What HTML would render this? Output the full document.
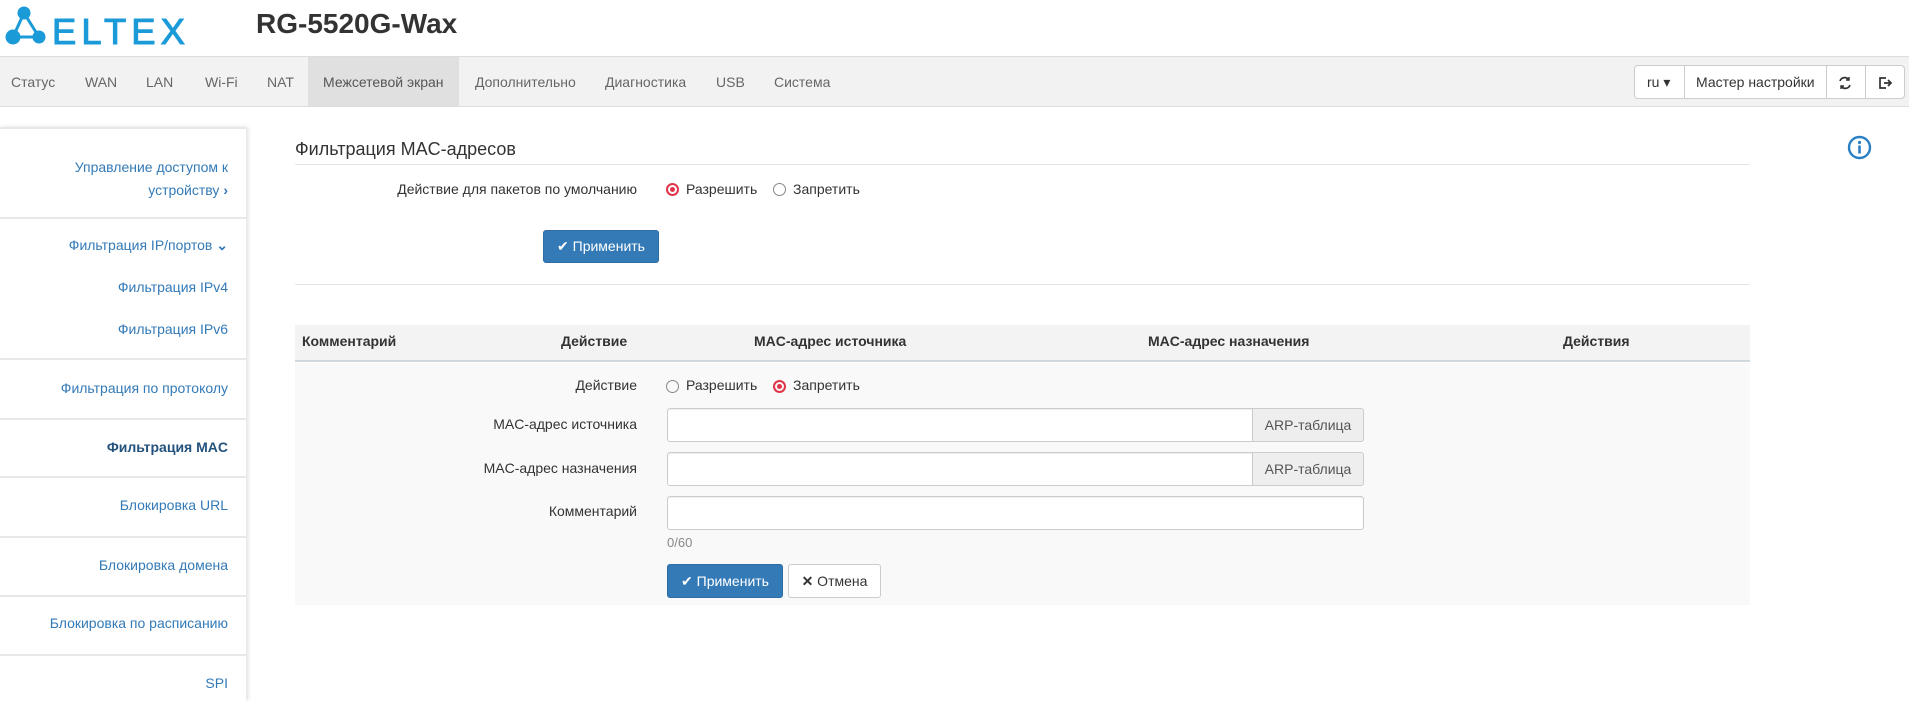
<!DOCTYPE html>
<html><head><meta charset="utf-8"><style>
*{box-sizing:border-box;margin:0;padding:0}
body{width:1909px;height:701px;overflow:hidden;background:#fff;font-family:"Liberation Sans","Noto Sans CJK SC",sans-serif;font-size:14px;color:#333;position:relative}
.a{position:absolute;white-space:nowrap}
.nav{position:absolute;left:0;top:56px;width:1909px;height:51px;background:#f2f2f2;border-top:1px solid #ddd;border-bottom:1px solid #ddd}
.nav span{position:absolute;top:17px;color:#666;font-size:14px}
.side{position:absolute;left:0;top:127px;width:246px;height:574px;background:#fff;box-shadow:2px 0 4px rgba(0,0,0,.12)}
.sl{position:absolute;left:0;width:246px;height:2px;background:#e8e8e8}
.si{position:absolute;right:18px;color:#337ab7;font-size:14px;text-align:right;white-space:nowrap}
.btnp{position:absolute;background:#337ab7;border:1px solid #2e6da4;border-radius:3px;color:#fff;font-size:14px;text-align:center}
.radio{position:absolute;width:13px;height:13px;border:1.5px solid #888;border-radius:50%}
.radio.on{border:2px solid #e0344a}
.radio.on::after{content:"";position:absolute;left:2px;top:2px;width:5px;height:5px;border-radius:50%;background:#e0344a}
.inp{position:absolute;background:#fff;border:1px solid #ccc;border-radius:3px;box-shadow:inset 0 1px 1px rgba(0,0,0,.075)}
.addon{position:absolute;background:#eee;border:1px solid #ccc;border-radius:0 3px 3px 0;color:#555;text-align:center;font-size:14px}
.th{position:absolute;top:333px;font-weight:bold;font-size:14px;color:#333}
</style></head><body>
<svg class="a" style="left:0;top:0" width="200" height="52">
<g fill="#1b9ad8" stroke="#1b9ad8" stroke-width="3">
<line x1="24" y1="13" x2="13" y2="37"/><line x1="24" y1="13" x2="39" y2="37"/><line x1="13" y1="37" x2="39" y2="37"/>
<circle cx="24" cy="13" r="6.5" stroke="none"/><circle cx="13" cy="37" r="7.5" stroke="none"/><circle cx="39" cy="37" r="6.5" stroke="none"/>
</g>
<text x="52" y="44" font-family="Liberation Sans" font-size="36" fill="#1b9ad8" stroke="#1b9ad8" stroke-width="1" letter-spacing="5" textLength="138" lengthAdjust="spacingAndGlyphs">ELTEX</text>
</svg>
<div class="a" style="left:256px;top:8px;font-size:28px;font-weight:bold;color:#333">RG-5520G-Wax</div>
<div class="nav">
<div style="position:absolute;left:308px;top:0;width:151px;height:49px;background:#e0e0e0"></div>
<span style="left:11px">Статус</span><span style="left:85px">WAN</span><span style="left:146px">LAN</span><span style="left:205px">Wi-Fi</span><span style="left:267px">NAT</span><span style="left:323px;color:#555">Межсетевой экран</span><span style="left:475px">Дополнительно</span><span style="left:605px">Диагностика</span><span style="left:716px">USB</span><span style="left:774px">Система</span>
<div style="position:absolute;left:1634px;top:8px;width:271px;height:34px;background:#fff;border:1px solid #ccc;border-radius:4px">
<div style="position:absolute;left:49px;top:0;width:1px;height:32px;background:#ccc"></div>
<div style="position:absolute;left:191px;top:0;width:1px;height:32px;background:#ccc"></div>
<div style="position:absolute;left:230px;top:0;width:1px;height:32px;background:#ccc"></div>
<span style="left:12px;top:8px;color:#333">ru ▾</span>
<span style="left:61px;top:8px;color:#333">Мастер настройки</span>
<svg style="position:absolute;left:202px;top:9px" width="16" height="16" viewBox="0 0 16 16" fill="none" stroke="#333" stroke-width="1.7"><path d="M3 6a5 5 0 0 1 9-1M13 10a5 5 0 0 1-9 1"/><path d="M12 2v3h-3M4 14v-3h3" stroke-width="1.4"/></svg>
<svg style="position:absolute;left:242px;top:9px" width="16" height="16" viewBox="0 0 16 16" fill="none" stroke="#333" stroke-width="1.7"><path d="M9 3H3v10h6M7 8h7M11 5l3 3-3 3"/></svg>
</div>
</div>
<div class="side">
<div class="sl" style="top:0"></div>
<div class="si" style="top:29px;line-height:23px">Управление доступом к<br>устройству <b>›</b></div>
<div class="sl" style="top:90px"></div>
<div class="si" style="top:110px">Фильтрация IP/портов <b>⌄</b></div>
<div class="si" style="top:152px">Фильтрация IPv4</div>
<div class="si" style="top:194px">Фильтрация IPv6</div>
<div class="sl" style="top:231px"></div>
<div class="si" style="top:253px">Фильтрация по протоколу</div>
<div class="sl" style="top:291px"></div>
<div class="si" style="top:312px;font-weight:bold;color:#23527c">Фильтрация MAC</div>
<div class="sl" style="top:349px"></div>
<div class="si" style="top:370px">Блокировка URL</div>
<div class="sl" style="top:409px"></div>
<div class="si" style="top:430px">Блокировка домена</div>
<div class="sl" style="top:468px"></div>
<div class="si" style="top:488px">Блокировка по расписанию</div>
<div class="sl" style="top:527px"></div>
<div class="si" style="top:548px">SPI</div>
</div>
<div class="a" style="left:295px;top:139px;font-size:18px;color:#333">Фильтрация MAC-адресов</div>
<div class="a" style="left:295px;top:164px;width:1455px;height:1px;background:#e5e5e5"></div>
<svg class="a" style="left:1847px;top:135px" width="25" height="25" viewBox="0 0 25 25"><circle cx="12.5" cy="12.5" r="10.5" fill="none" stroke="#2a7fc4" stroke-width="2.4"/><circle cx="12.5" cy="7.5" r="1.6" fill="#2a7fc4"/><rect x="11.2" y="10.5" width="2.6" height="8" fill="#2a7fc4"/></svg>
<div class="a" style="left:300px;width:337px;text-align:right;top:181px">Действие для пакетов по умолчанию</div>
<div class="radio on" style="left:666px;top:183px"></div><div class="a" style="left:686px;top:181px">Разрешить</div>
<div class="radio" style="left:773px;top:183px"></div><div class="a" style="left:793px;top:181px">Запретить</div>
<div class="btnp" style="left:543px;top:230px;width:116px;height:33px;line-height:31px">✔ Применить</div>
<div class="a" style="left:295px;top:284px;width:1455px;height:1px;background:#e5e5e5"></div>
<div class="a" style="left:295px;top:325px;width:1455px;height:37px;background:#f3f3f3;border-bottom:2px solid #cfd8dc"></div>
<div class="th" style="left:302px">Комментарий</div>
<div class="th" style="left:561px">Действие</div>
<div class="th" style="left:754px">MAC-адрес источника</div>
<div class="th" style="left:1148px">MAC-адрес назначения</div>
<div class="th" style="left:1563px">Действия</div>
<div class="a" style="left:295px;top:363px;width:1455px;height:242px;background:#f9f9f9"></div>
<div class="a" style="left:300px;width:337px;text-align:right;top:377px">Действие</div>
<div class="radio" style="left:666px;top:380px"></div><div class="a" style="left:686px;top:377px">Разрешить</div>
<div class="radio on" style="left:773px;top:380px"></div><div class="a" style="left:793px;top:377px">Запретить</div>
<div class="a" style="left:300px;width:337px;text-align:right;top:416px">MAC-адрес источника</div>
<div class="inp" style="left:667px;top:408px;width:586px;height:34px;border-radius:3px 0 0 3px"></div>
<div class="addon" style="left:1252px;top:408px;width:112px;height:34px;line-height:32px">ARP-таблица</div>
<div class="a" style="left:300px;width:337px;text-align:right;top:460px">MAC-адрес назначения</div>
<div class="inp" style="left:667px;top:452px;width:586px;height:34px;border-radius:3px 0 0 3px"></div>
<div class="addon" style="left:1252px;top:452px;width:112px;height:34px;line-height:32px">ARP-таблица</div>
<div class="a" style="left:300px;width:337px;text-align:right;top:503px">Комментарий</div>
<div class="inp" style="left:667px;top:496px;width:697px;height:34px"></div>
<div class="a" style="left:667px;top:535px;color:#888;font-size:13px">0/60</div>
<div class="btnp" style="left:667px;top:564px;width:116px;height:34px;line-height:32px">✔ Применить</div>
<div class="a" style="left:788px;top:564px;width:93px;height:34px;line-height:32px;border:1px solid #ccc;border-radius:3px;background:#fff;text-align:center"><b>✕</b> Отмена</div>
</body></html>
